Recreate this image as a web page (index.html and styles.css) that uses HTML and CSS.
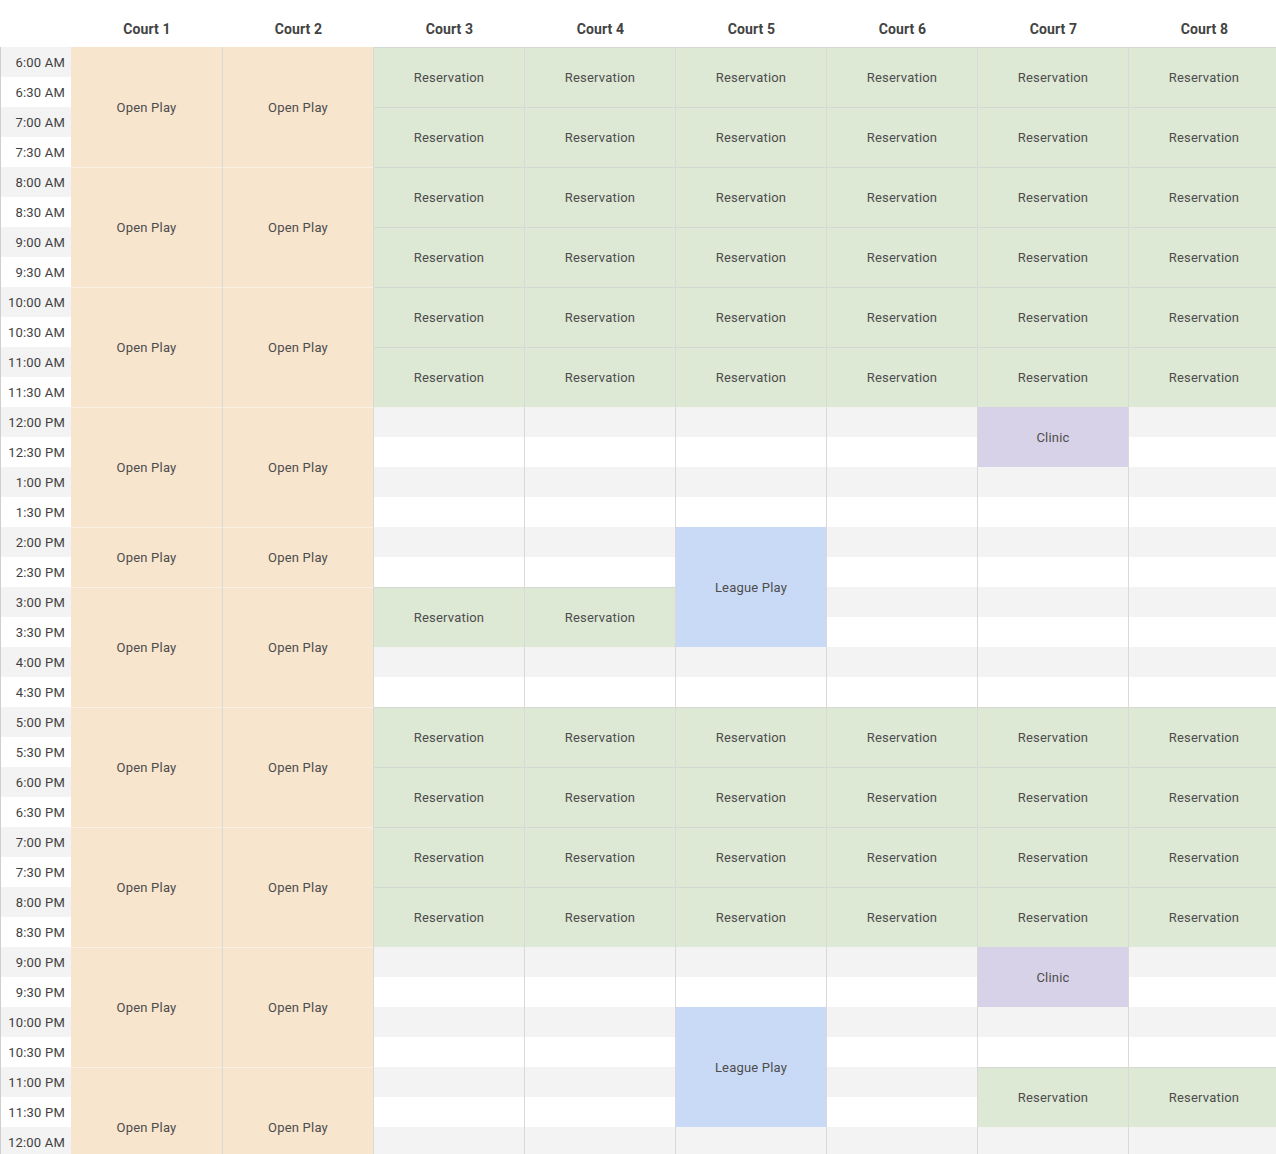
FILE: index.html
```html
<!DOCTYPE html>
<html lang="en">
<head>
<meta charset="utf-8">
<title>Court Schedule</title>
<link rel="stylesheet" href="styles.css">
</head>
<body>
<div class="sched">
  <div class="col time">
    <div class="head"></div>
    <div class="t g">6:00 AM</div><div class="t">6:30 AM</div>
    <div class="t g">7:00 AM</div><div class="t">7:30 AM</div>
    <div class="t g">8:00 AM</div><div class="t">8:30 AM</div>
    <div class="t g">9:00 AM</div><div class="t">9:30 AM</div>
    <div class="t g">10:00 AM</div><div class="t">10:30 AM</div>
    <div class="t g">11:00 AM</div><div class="t">11:30 AM</div>
    <div class="t g">12:00 PM</div><div class="t">12:30 PM</div>
    <div class="t g">1:00 PM</div><div class="t">1:30 PM</div>
    <div class="t g">2:00 PM</div><div class="t">2:30 PM</div>
    <div class="t g">3:00 PM</div><div class="t">3:30 PM</div>
    <div class="t g">4:00 PM</div><div class="t">4:30 PM</div>
    <div class="t g">5:00 PM</div><div class="t">5:30 PM</div>
    <div class="t g">6:00 PM</div><div class="t">6:30 PM</div>
    <div class="t g">7:00 PM</div><div class="t">7:30 PM</div>
    <div class="t g">8:00 PM</div><div class="t">8:30 PM</div>
    <div class="t g">9:00 PM</div><div class="t">9:30 PM</div>
    <div class="t g">10:00 PM</div><div class="t">10:30 PM</div>
    <div class="t g">11:00 PM</div><div class="t">11:30 PM</div>
    <div class="t g">12:00 AM</div>
  </div>

  <div class="col court first">
    <div class="head">Court 1</div>
    <div class="b open s4">Open Play</div>
    <div class="b open s4">Open Play</div>
    <div class="b open s4">Open Play</div>
    <div class="b open s4">Open Play</div>
    <div class="b open s2">Open Play</div>
    <div class="b open s4">Open Play</div>
    <div class="b open s4">Open Play</div>
    <div class="b open s4">Open Play</div>
    <div class="b open s4">Open Play</div>
    <div class="b open s4">Open Play</div>
  </div>

  <div class="col court">
    <div class="head">Court 2</div>
    <div class="b open s4">Open Play</div>
    <div class="b open s4">Open Play</div>
    <div class="b open s4">Open Play</div>
    <div class="b open s4">Open Play</div>
    <div class="b open s2">Open Play</div>
    <div class="b open s4">Open Play</div>
    <div class="b open s4">Open Play</div>
    <div class="b open s4">Open Play</div>
    <div class="b open s4">Open Play</div>
    <div class="b open s4">Open Play</div>
  </div>

  <div class="col court">
    <div class="head">Court 3</div>
    <div class="b res s2">Reservation</div><div class="b res s2">Reservation</div>
    <div class="b res s2">Reservation</div><div class="b res s2">Reservation</div>
    <div class="b res s2">Reservation</div><div class="b res s2">Reservation</div>
    <div class="e g"></div><div class="e"></div><div class="e g"></div><div class="e"></div><div class="e g"></div><div class="e"></div>
    <div class="b res s2">Reservation</div>
    <div class="e g"></div><div class="e"></div>
    <div class="b res s2">Reservation</div><div class="b res s2">Reservation</div>
    <div class="b res s2">Reservation</div><div class="b res s2">Reservation</div>
    <div class="e g"></div><div class="e"></div><div class="e g"></div><div class="e"></div><div class="e g"></div><div class="e"></div><div class="e g"></div>
  </div>

  <div class="col court">
    <div class="head">Court 4</div>
    <div class="b res s2">Reservation</div><div class="b res s2">Reservation</div>
    <div class="b res s2">Reservation</div><div class="b res s2">Reservation</div>
    <div class="b res s2">Reservation</div><div class="b res s2">Reservation</div>
    <div class="e g"></div><div class="e"></div><div class="e g"></div><div class="e"></div><div class="e g"></div><div class="e"></div>
    <div class="b res s2">Reservation</div>
    <div class="e g"></div><div class="e"></div>
    <div class="b res s2">Reservation</div><div class="b res s2">Reservation</div>
    <div class="b res s2">Reservation</div><div class="b res s2">Reservation</div>
    <div class="e g"></div><div class="e"></div><div class="e g"></div><div class="e"></div><div class="e g"></div><div class="e"></div><div class="e g"></div>
  </div>

  <div class="col court">
    <div class="head">Court 5</div>
    <div class="b res s2">Reservation</div><div class="b res s2">Reservation</div>
    <div class="b res s2">Reservation</div><div class="b res s2">Reservation</div>
    <div class="b res s2">Reservation</div><div class="b res s2">Reservation</div>
    <div class="e g"></div><div class="e"></div><div class="e g"></div><div class="e"></div>
    <div class="b league s4">League Play</div>
    <div class="e g"></div><div class="e"></div>
    <div class="b res s2">Reservation</div><div class="b res s2">Reservation</div>
    <div class="b res s2">Reservation</div><div class="b res s2">Reservation</div>
    <div class="e g"></div><div class="e"></div>
    <div class="b league s4">League Play</div>
    <div class="e g"></div>
  </div>

  <div class="col court">
    <div class="head">Court 6</div>
    <div class="b res s2">Reservation</div><div class="b res s2">Reservation</div>
    <div class="b res s2">Reservation</div><div class="b res s2">Reservation</div>
    <div class="b res s2">Reservation</div><div class="b res s2">Reservation</div>
    <div class="e g"></div><div class="e"></div><div class="e g"></div><div class="e"></div><div class="e g"></div>
    <div class="e"></div><div class="e g"></div><div class="e"></div><div class="e g"></div><div class="e"></div>
    <div class="b res s2">Reservation</div><div class="b res s2">Reservation</div>
    <div class="b res s2">Reservation</div><div class="b res s2">Reservation</div>
    <div class="e g"></div><div class="e"></div><div class="e g"></div><div class="e"></div><div class="e g"></div><div class="e"></div><div class="e g"></div>
  </div>

  <div class="col court">
    <div class="head">Court 7</div>
    <div class="b res s2">Reservation</div><div class="b res s2">Reservation</div>
    <div class="b res s2">Reservation</div><div class="b res s2">Reservation</div>
    <div class="b res s2">Reservation</div><div class="b res s2">Reservation</div>
    <div class="b clinic s2">Clinic</div>
    <div class="e g"></div><div class="e"></div><div class="e g"></div><div class="e"></div>
    <div class="e g"></div><div class="e"></div><div class="e g"></div><div class="e"></div>
    <div class="b res s2">Reservation</div><div class="b res s2">Reservation</div>
    <div class="b res s2">Reservation</div><div class="b res s2">Reservation</div>
    <div class="b clinic s2">Clinic</div>
    <div class="e g"></div><div class="e"></div>
    <div class="b res s2">Reservation</div>
    <div class="e g"></div>
  </div>

  <div class="col court">
    <div class="head">Court 8</div>
    <div class="b res s2">Reservation</div><div class="b res s2">Reservation</div>
    <div class="b res s2">Reservation</div><div class="b res s2">Reservation</div>
    <div class="b res s2">Reservation</div><div class="b res s2">Reservation</div>
    <div class="e g"></div><div class="e"></div><div class="e g"></div><div class="e"></div><div class="e g"></div>
    <div class="e"></div><div class="e g"></div><div class="e"></div><div class="e g"></div><div class="e"></div>
    <div class="b res s2">Reservation</div><div class="b res s2">Reservation</div>
    <div class="b res s2">Reservation</div><div class="b res s2">Reservation</div>
    <div class="e g"></div><div class="e"></div><div class="e g"></div><div class="e"></div>
    <div class="b res s2">Reservation</div>
    <div class="e g"></div>
  </div>
</div>
</body>
</html>
```

FILE: styles.css
```css
* { box-sizing: border-box; }

html, body {
  margin: 0;
  padding: 0;
  background: #ffffff;
  overflow: hidden;
}

body {
  font-family: Roboto, "Liberation Sans", Arial, sans-serif;
  color: #4a4a4a;
  width: 1276px;
  height: 1154px;
}

.sched {
  display: flex;
  align-items: flex-start;
  width: 1279px;
}

.col {
  display: flex;
  flex-direction: column;
  flex: none;
}

.time { width: 71px; }

.court {
  width: 151px;
  border-right: 1px solid #d9d9d9;
}

.court.first { width: 152px; }

.head {
  height: 47px;
  padding-top: 10px;
  display: flex;
  align-items: center;
  justify-content: center;
  font-size: 14px;
  font-weight: 700;
  letter-spacing: 0.1px;
  color: #434343;
  background: #ffffff;
}

.court .head { margin-right: -1px; position: relative; }

.t {
  height: 30px;
  display: flex;
  align-items: center;
  justify-content: flex-end;
  padding-right: 6px;
  font-size: 13px;
  letter-spacing: 0.2px;
  color: #3f3f3f;
  background: #ffffff;
  border-left: 1px solid #cfcfcf;
}

.g { background: #f3f3f3; }

.e { height: 30px; background: #ffffff; }
.e.g { background: #f3f3f3; }

.b {
  flex: none;
  display: flex;
  align-items: center;
  justify-content: center;
  font-size: 13px;
  letter-spacing: 0.2px;
  color: #4d4d4d;
}

.s2 { height: 60px; }
.s4 { height: 120px; }

.open {
  background: #f8e5cd;
  border-top: 1px solid #fbf1e6;
}
.open:nth-child(2) { border-top: none; }

.res {
  background: #dde8d5;
  border-top: 1px solid #d3d8d0;
}

.league { background: #c9daf6; }
.clinic { background: #d8d2e8; }
```
